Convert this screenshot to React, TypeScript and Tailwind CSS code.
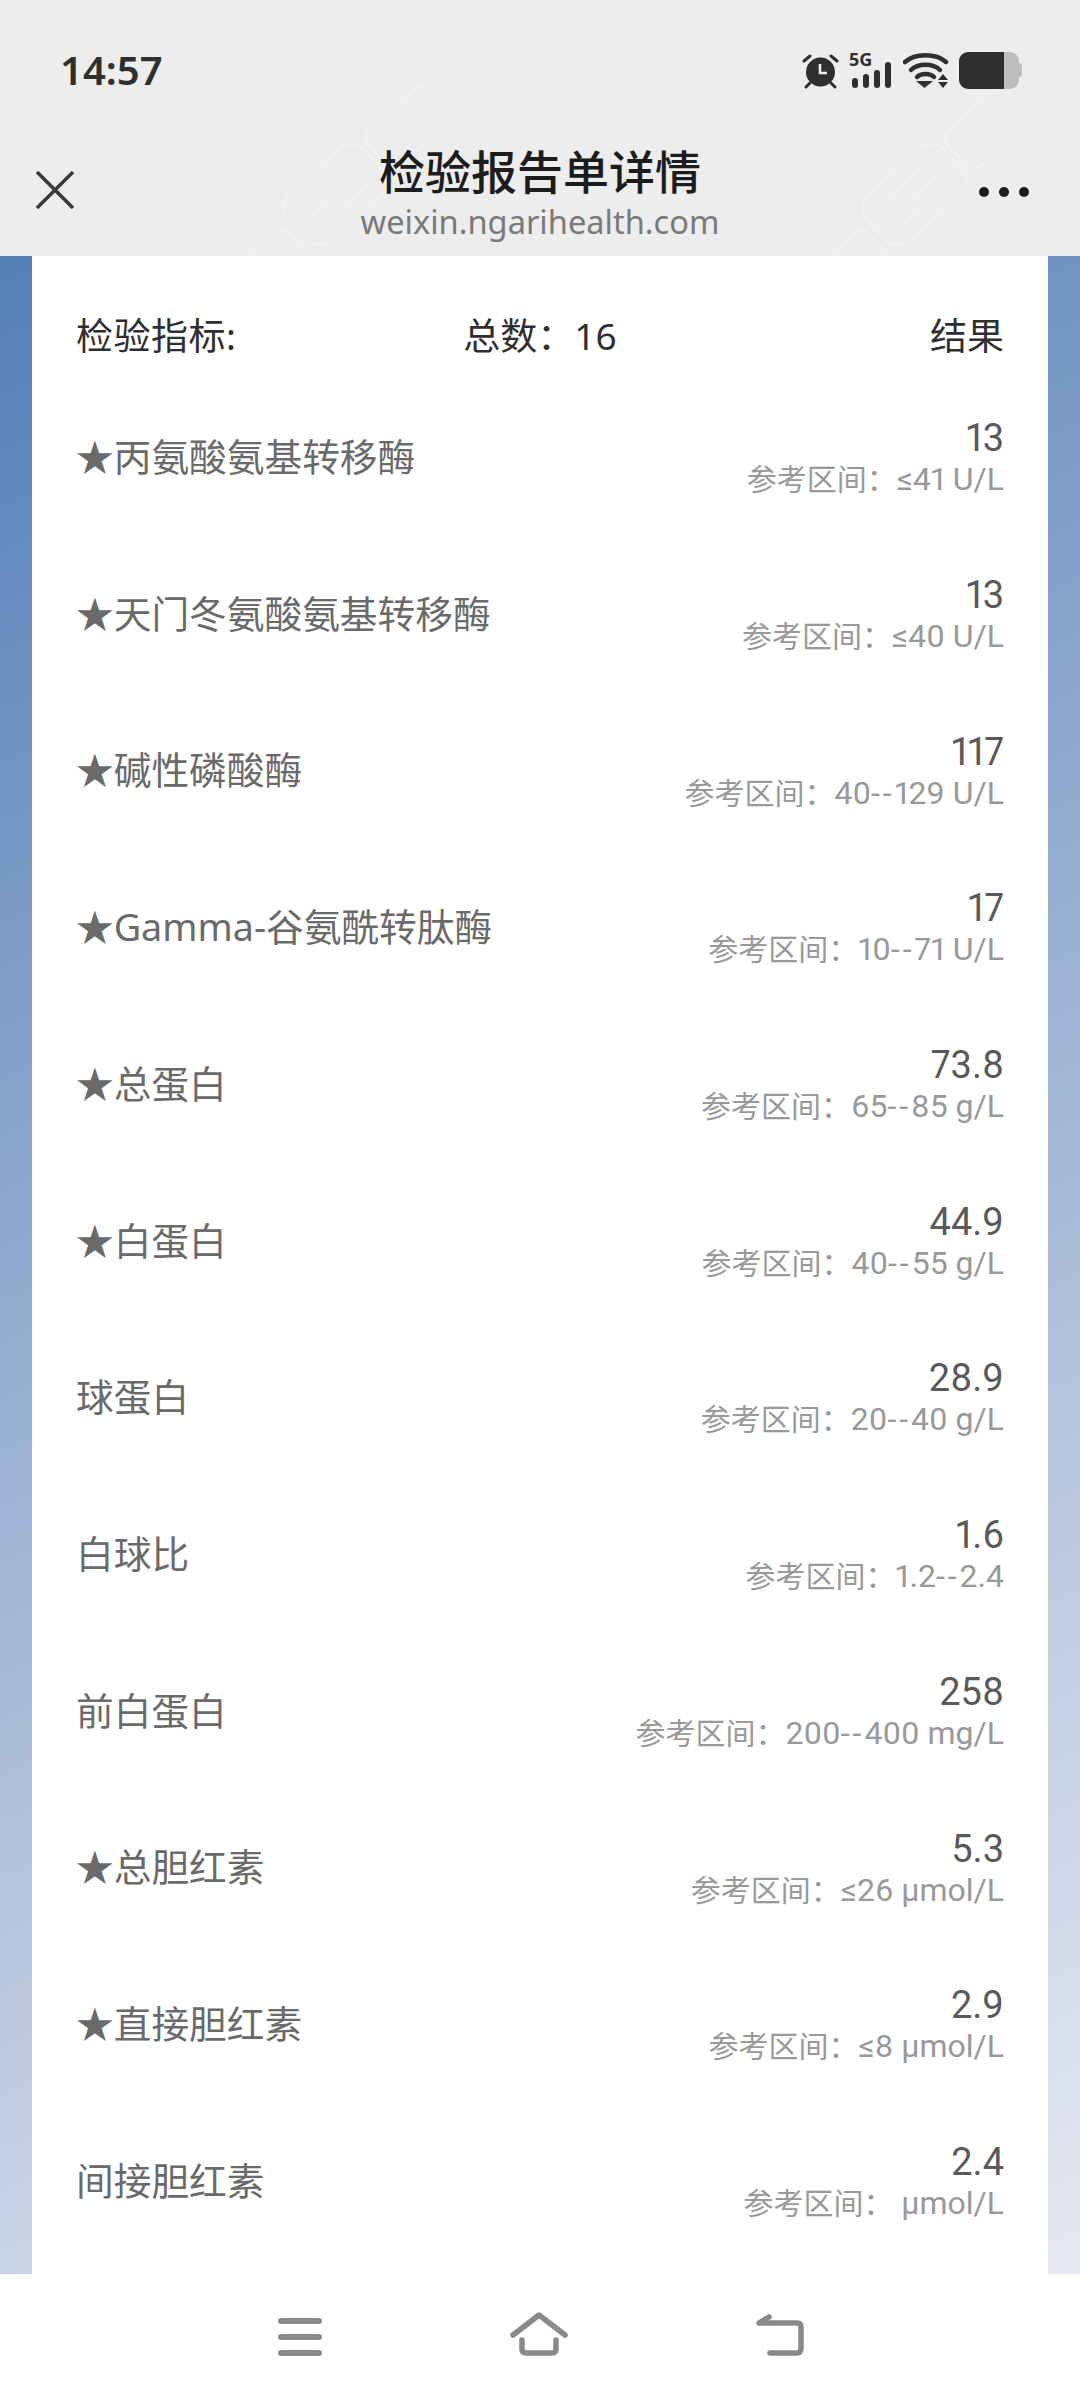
const rows = [
  { name: "★丙氨酸氨基转移酶", value: "13", range: "≤41 U/L" },
  { name: "★天门冬氨酸氨基转移酶", value: "13", range: "≤40 U/L" },
  { name: "★碱性磷酸酶", value: "117", range: "40--129 U/L" },
  { name: "★Gamma-谷氨酰转肽酶", value: "17", range: "10--71 U/L" },
  { name: "★总蛋白", value: "73.8", range: "65--85 g/L" },
  { name: "★白蛋白", value: "44.9", range: "40--55 g/L" },
  { name: "球蛋白", value: "28.9", range: "20--40 g/L" },
  { name: "白球比", value: "1.6", range: "1.2--2.4" },
  { name: "前白蛋白", value: "258", range: "200--400 mg/L" },
  { name: "★总胆红素", value: "5.3", range: "≤26 μmol/L" },
  { name: "★直接胆红素", value: "2.9", range: "≤8 μmol/L" },
  { name: "间接胆红素", value: "2.4", range: " μmol/L" },
];

const Watermark = ({ className }: { className: string }) => (
  <svg className={className} width="240" height="190" viewBox="0 0 240 190" fill="none" stroke="#f2f2f2" strokeWidth="2">
    <g transform="rotate(-42 120 95)">
      <rect x="-8" y="112" width="76" height="44" rx="8" />
      <rect x="76" y="92" width="104" height="62" rx="18" />
      <path d="M96 108h62M96 124h62M96 138h62" />
      <rect x="186" y="98" width="84" height="48" rx="10" />
    </g>
  </svg>
);

const AlarmIcon = () => (
  <svg width="37" height="37" viewBox="0 0 37 37">
    <circle cx="18.5" cy="20" r="14.5" fill="#2f2f2f" />
    <path d="M18 12v9h7" fill="none" stroke="#ededed" strokeWidth="2.6" />
    <path d="M2 9l6-5M35 9l-6-5M8 31l-4 4M29 31l4 4" fill="none" stroke="#2f2f2f" strokeWidth="3" strokeLinecap="round" />
  </svg>
);

const SignalIcon = () => (
  <div className="relative h-[38px] w-[44px]">
    <span className="absolute left-0 top-[-3px] text-[18px] font-bold leading-[22px] text-[#2f2f2f]">5G</span>
    <svg className="absolute left-0 top-0" width="44" height="38" viewBox="0 0 44 38">
      <rect x="3" y="27" width="6" height="10" rx="3" fill="#2f2f2f" />
      <rect x="14" y="23" width="6" height="14" rx="3" fill="#2f2f2f" />
      <rect x="25" y="19" width="6" height="18" rx="3" fill="#2f2f2f" />
      <rect x="36" y="11" width="6" height="26" rx="3" fill="#2f2f2f" />
    </svg>
  </div>
);

const WifiIcon = () => (
  <svg width="46" height="38" viewBox="0 0 46 38">
    <path d="M2 11C12 2 33 2 43 11" fill="none" stroke="#2f2f2f" strokeWidth="4.5" strokeLinecap="round" />
    <path d="M8 19C15 12 30 12 37 19" fill="none" stroke="#2f2f2f" strokeWidth="4.5" strokeLinecap="round" />
    <path d="M14 26C18 22 27 22 31 26" fill="none" stroke="#2f2f2f" strokeWidth="4.5" strokeLinecap="round" />
    <path d="M13 30h17l-8.500 7zM35 29l5-6 5 6zM35 31h10l-5 6z" fill="#2f2f2f" />
  </svg>
);

const BatteryIcon = () => (
  <div className="flex items-center">
    <div className="flex h-[37px] w-[60px] overflow-hidden rounded-[9px]">
      <div className="w-[45px] bg-[#2f2f2f]" />
      <div className="flex-1 bg-[#bdbdbd]" />
    </div>
    <div className="h-[14px] w-[3px] rounded-r-sm bg-[#bdbdbd]" />
  </div>
);

const NavIcons = () => (
  <>
    <svg width="44" height="38" viewBox="0 0 44 38" fill="none" stroke="#8a8a8a" strokeWidth="6" strokeLinecap="round">
      <path d="M3 3h38M3 19h38M3 35h38" />
    </svg>
    <svg width="58" height="44" viewBox="0 0 58 44" fill="none" stroke="#8a8a8a" strokeWidth="5.500" strokeLinecap="round" strokeLinejoin="round">
      <path d="M3 23L29 3l26 20" />
      <path d="M12 28v9q0 4 4 4h26q4 0 4-4v-9" />
    </svg>
    <svg width="48" height="42" viewBox="0 0 48 42" fill="none" stroke="#8a8a8a" strokeWidth="5.500" strokeLinecap="round" strokeLinejoin="round">
      <path d="M13 3L3 9h38q4 0 4 4v21q0 5-4 5H14" />
    </svg>
  </>
);

// the hyphens in the ranges sit wider apart than the font sets them
const RangeText = ({ range }: { range: string }) => {
  const parts = range.split("--");
  return (
    <span className="font-['Roboto','Noto_Sans_CJK_SC',sans-serif] text-[32px] proportional-nums">
      {parts[0]}
      {parts[1] !== undefined && <span className="tracking-[3px]">--</span>}
      {parts[1]}
    </span>
  );
};

export default function App() {
  return (
    <div className="flex h-[2400px] w-[1080px] flex-col overflow-hidden bg-white font-['Noto_Sans','Noto_Sans_CJK_SC',sans-serif]">
      <div className="relative h-[256px] shrink-0 overflow-hidden bg-[#ededed]">
        <Watermark className="absolute left-[190px] top-[84px]" />
        <Watermark className="absolute left-[770px] top-[84px]" />

        <div className="relative flex h-[96px] items-center justify-between pl-[60px] pr-[58px] pt-[44px]">
          <div className="flex items-center gap-[20px]">
            <span className="text-[40px] font-semibold leading-none text-[#2f2f2f]">14:57</span>
            <div className="h-[28px] w-[28px] rounded bg-[#ebedef]" />
          </div>
          <div className="flex items-center gap-[10px]">
            <AlarmIcon />
            <SignalIcon />
            <WifiIcon />
            <BatteryIcon />
          </div>
        </div>

        <div className="relative grid h-[160px] grid-cols-[1fr_auto_1fr] px-[36px]">
          <div className="pt-[75px]">
            <svg width="38" height="38" viewBox="0 0 38 38" stroke="#3a3a3a" strokeWidth="3.500">
              <path d="M1 1l36 36M37 1L1 37" />
            </svg>
          </div>
          <div className="flex flex-col items-center pt-[47px]">
            <div className="text-[46px] font-medium leading-[57px] text-[#1c1c1c]">检验报告单详情</div>
            <div className="text-[32.600px] leading-[44px] text-[#7a7a7a]">weixin.ngarihealth.com</div>
          </div>
          <div className="flex justify-end gap-[10px] pr-[15px] pt-[91px]">
            <div className="h-[10px] w-[10px] rounded-full bg-[#1c1c1c]" />
            <div className="h-[10px] w-[10px] rounded-full bg-[#1c1c1c]" />
            <div className="h-[10px] w-[10px] rounded-full bg-[#1c1c1c]" />
          </div>
        </div>
      </div>

      <div className="flex-1 overflow-hidden bg-[linear-gradient(155deg,#557fb6_0%,#e6e9f2_100%)] px-[32px]">
        <div className="h-full bg-white pl-[44px] pr-[44px]">
          <div className="grid h-[123px] grid-cols-3 items-start pt-[56px] text-[37px] leading-[48px] text-[#2f2f2f]">
            <div className="tracking-[0.5px]">检验指标:</div>
            <div className="text-center">总数：16</div>
            <div className="text-right">结果</div>
          </div>
          {rows.map((row) => (
            <div key={row.name} className="flex h-[156.7px] items-center justify-between">
              <div className="text-[37.700px] text-[#6a6a6a]">{row.name}</div>
              <div className="flex flex-col items-end">
                <div className="font-['Roboto','Noto_Sans',sans-serif] text-[38px] leading-[44px] text-[#5a5a5a] proportional-nums">{row.value}</div>
                <div className="text-[30px] leading-[37px] whitespace-pre text-[#999999]">
                  参考区间：<RangeText range={row.range} />
                </div>
              </div>
            </div>
          ))}
        </div>
      </div>

      <div className="flex h-[126px] shrink-0 items-end justify-between bg-white pb-[44px] pl-[278px] pr-[276px]">
        <NavIcons />
      </div>
    </div>
  );
}
